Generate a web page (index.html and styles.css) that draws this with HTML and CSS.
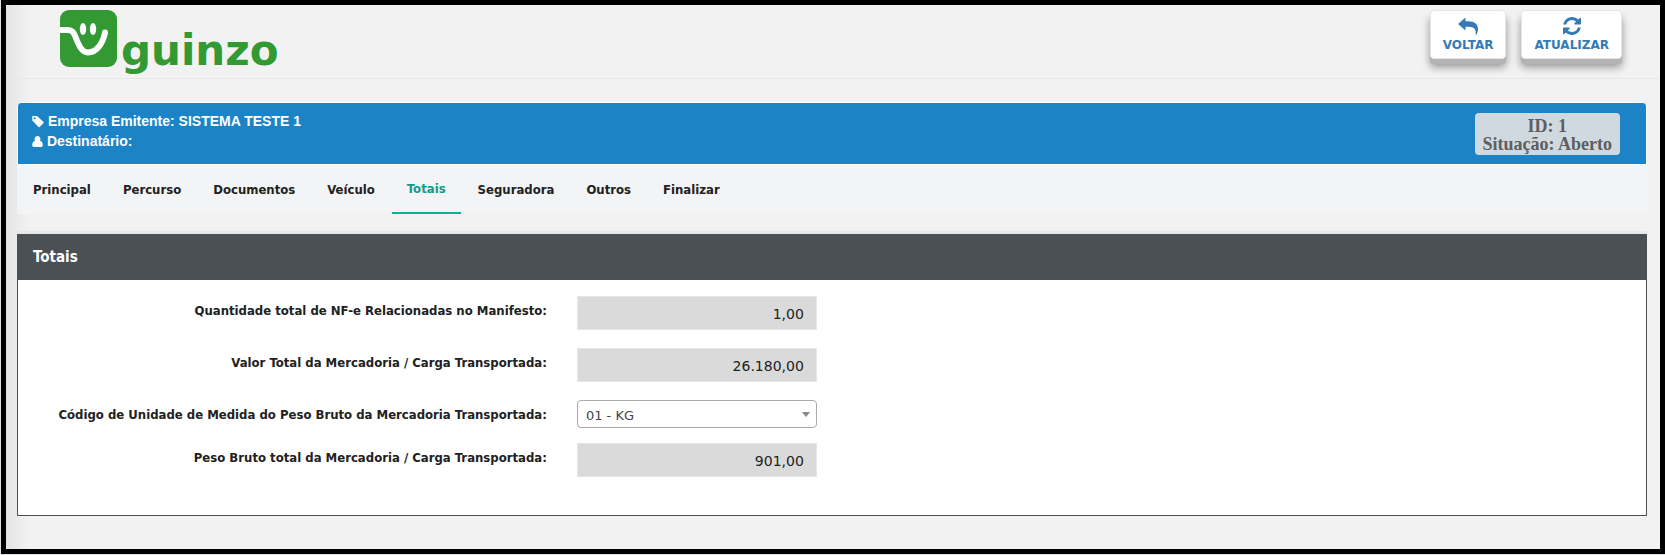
FILE: index.html
```html
<!DOCTYPE html>
<html lang="pt-br">
<head>
  <meta charset="UTF-8">
  <meta name="viewport" content="width=device-width, initial-scale=1.0">
  <title>Guinzo - Manifesto</title>
  <link rel="stylesheet" href="styles.css">
</head>
<body>
  <div class="page">

    <header class="header">
      <a class="logo" href="#">
        <svg class="logo-icon" viewBox="0 0 57 57" aria-hidden="true">
          <rect width="57" height="57" rx="9" fill="#339933"/>
          <path d="M0 20H8C12 20 13.500 22 15.500 27C19 36 22 42.500 28 42.500C37 42.500 43 33 45 22.500" fill="none" stroke="#fff" stroke-width="6"/>
          <circle cx="45" cy="22.500" r="3" fill="#fff"/>
          <ellipse cx="23" cy="19" rx="3.200" ry="6" fill="#fff"/>
          <ellipse cx="33" cy="19" rx="3.200" ry="6" fill="#fff"/>
        </svg>
        <span class="logo-text">guinzo</span>
      </a>
      <div class="header-buttons">
        <button type="button" class="btn-top">
          <svg width="20" height="18" viewBox="0 0 20 18" aria-hidden="true"><path fill="currentColor" d="M7.500 0.500V4.200H10C17 4.200 20 7.500 20 12C20 14.500 19 17 18.200 17.700C17.800 18 17.500 17.800 17.600 17.300C18.300 12.500 16.500 9.800 10 9.800H7.500V13.500L0 7Z"/></svg>
          <span>VOLTAR</span>
        </button>
        <button type="button" class="btn-top">
          <svg width="18" height="18" viewBox="0 0 1536 1536" aria-hidden="true"><path fill="currentColor" d="M1511 928q0 5-1 7-64 268-268 434.500T764 1536q-146 0-282.500-55T238 1324l-129 129q-19 19-45 19t-45-19-19-45V960q0-26 19-45t45-19h448q26 0 45 19t19 45-19 45l-137 137q71 66 161 102t187 36q134 0 250-65t186-179q11-17 53-117 8-23 30-23h192q13 0 22.500 9.500t9.500 22.500zm25-800v448q0 26-19 45t-45 19h-448q-26 0-45-19t-19-45 19-45l138-138Q969 256 768 256q-134 0-250 65T332 500q-11 17-53 117-8 23-30 23H50q-13 0-22.500-9.500T18 608v-7q65-268 270-434.500T768 0q146 0 284 55.500T1297 212l130-129q19-19 45-19t45 19 19 45z"/></svg>
          <span>ATUALIZAR</span>
        </button>
      </div>
    </header>

    <main class="content">
      <section class="banner">
        <div class="banner-info">
          <div>
            <svg width="12" height="13" viewBox="0 0 13 13" aria-hidden="true"><path fill="currentColor" fill-rule="evenodd" d="M1 0.500H5.500L12.500 7Q13 7.600 12.500 8.200L8.300 12.400Q7.700 12.900 7.100 12.400L0.300 5.500V1.200Q0.400 0.600 1 0.500ZM2.800 1.900A1.100 1.100 0 1 0 2.810 1.900Z"/></svg>
            Empresa Emitente: SISTEMA TESTE 1
          </div>
          <div>
            <svg width="11" height="13" viewBox="0 0 12 13" aria-hidden="true"><path fill="currentColor" d="M6 0.500A3.200 3.300 0 0 1 8.600 5.800Q11.700 6.200 11.700 10.500Q11.700 12.500 9.700 12.500H2.300Q0.300 12.500 0.300 10.500Q0.300 6.200 3.400 5.800A3.200 3.300 0 0 1 6 0.500Z"/></svg>
            Destinatário:
          </div>
        </div>
        <div class="banner-status">
          ID: 1<br>
          Situação: Aberto
        </div>
      </section>

      <nav class="tabs">
        <a href="#">Principal</a>
        <a href="#">Percurso</a>
        <a href="#">Documentos</a>
        <a href="#">Veículo</a>
        <a href="#" class="active">Totais</a>
        <a href="#">Seguradora</a>
        <a href="#">Outros</a>
        <a href="#">Finalizar</a>
      </nav>

      <section class="panel">
        <h2 class="panel-title">Totais</h2>
        <form class="panel-body">
          <div class="form-row">
            <label for="qtdNfe">Quantidade total de NF-e Relacionadas no Manifesto:</label>
            <div class="field"><input type="text" id="qtdNfe" value="1,00" readonly></div>
          </div>
          <div class="form-row">
            <label for="valorTotal">Valor Total da Mercadoria / Carga Transportada:</label>
            <div class="field"><input type="text" id="valorTotal" value="26.180,00" readonly></div>
          </div>
          <div class="form-row">
            <label for="unidade">Código de Unidade de Medida do Peso Bruto da Mercadoria Transportada:</label>
            <div class="field select-field">
              <select id="unidade">
                <option>01 - KG</option>
                <option>02 - TON</option>
              </select>
            </div>
          </div>
          <div class="form-row">
            <label for="pesoBruto">Peso Bruto total da Mercadoria / Carga Transportada:</label>
            <div class="field"><input type="text" id="pesoBruto" value="901,00" readonly></div>
          </div>
        </form>
      </section>
    </main>

  </div>
</body>
</html>
```

FILE: styles.css
```css
* {
  box-sizing: border-box;
}

body {
  margin: 0;
  padding: 0 0 1px 1px;
  min-height: 100vh;
  display: flex;
  background: #dfe2e5;
  font-family: "DejaVu Sans Condensed", "DejaVu Sans", sans-serif;
  font-size: 13px;
  color: #212121;
}

.page {
  flex: 1;
  border: 5px solid #000;
  background: linear-gradient(to right, #e4e4e4, #f2f2f2 24px);
}

/* topo */
.header {
  display: flex;
  justify-content: space-between;
  align-items: flex-start;
  height: 74px;
  padding: 5px 38px 0 54px;
  border-bottom: 1px solid #e7e7e7;
}

.logo {
  display: flex;
  gap: 4px;
  color: #339933;
  text-decoration: none;
}

.logo-icon {
  width: 57px;
  height: 57px;
}

.logo-text {
  padding-top: 15px;
  font-family: "DejaVu Sans", sans-serif;
  font-size: 42px;
  font-weight: bold;
  line-height: 52px;
}

.header-buttons {
  display: flex;
  gap: 15px;
}

.btn-top {
  display: flex;
  flex-direction: column;
  align-items: center;
  height: 49px;
  padding: 6px 12px 0;
  border: 1px solid #e7e7e7;
  border-radius: 4px;
  background: #fff;
  box-shadow: 0 5px 0 #b3b3b3, 0 8px 8px rgba(0, 0, 0, 0.4);
  color: #337ab7;
  font-family: "DejaVu Sans", sans-serif;
  font-size: 12px;
  font-weight: bold;
  line-height: 20px;
  cursor: pointer;
}

.content {
  padding: 23px 13px 0 11px;
}

/* faixa azul */
.banner {
  display: flex;
  justify-content: space-between;
  height: 63px;
  padding: 8px 26px 0 14px;
  border: 1px solid #fff;
  border-radius: 4px 4px 0 0;
  background: #1c84c6;
  color: #fff;
}

.banner-info {
  font-family: "Liberation Sans", Arial, sans-serif;
  font-size: 14px;
  font-weight: bold;
  line-height: 20px;
}

.banner-info svg {
  vertical-align: -2px;
}

.banner-status {
  height: 42px;
  margin-top: 2px;
  padding: 4px 8px;
  border-radius: 4px;
  background: #d0d9df;
  color: #5e5e5e;
  font-family: "Liberation Serif", "Times New Roman", serif;
  font-size: 18px;
  font-weight: bold;
  line-height: 18px;
  text-align: center;
}

/* abas */
.tabs {
  display: flex;
  gap: 2px;
  height: 49px;
  padding-left: 1px;
  background: #f3f4f6;
}

.tabs a {
  padding: 16px 15px 0;
  color: #212121;
  font-weight: bold;
  line-height: 18px;
  text-decoration: none;
}

.tabs .active {
  padding-top: 15px;
  border-bottom: 2px solid #00b393;
  color: #109c87;
}

/* painel */
.panel {
  margin-top: 20px;
  border: 1px solid #4b5054;
  background: #fff;
  box-shadow: 0 -3px 0 #e5e7e8;
}

.panel-title {
  margin: 0;
  padding: 0 15px;
  background: #4b5054;
  color: #fff;
  font-size: 15px;
  line-height: 45px;
}

.panel-body {
  padding: 16px 0 20px 2px;
}

.form-row {
  display: flex;
  margin-bottom: 15px;
}

.form-row label {
  width: 33.33%;
  padding: 6px 15px 0 0;
  font-weight: bold;
  line-height: 18px;
  text-align: right;
}

.field {
  position: relative;
  width: 16.6%;
  min-width: 180px;
  padding: 0 15px;
}

.field input {
  display: block;
  width: 100%;
  height: 34px;
  margin-bottom: 3px;
  padding: 2px 12px 0;
  border: 1px solid #e5e6e7;
  background: #dadada;
  color: #212121;
  font-family: "DejaVu Sans", sans-serif;
  font-size: 14px;
  text-align: right;
}

.field select {
  display: block;
  width: 100%;
  height: 28px;
  padding: 2px 8px 0;
  border: 1px solid #aaa;
  border-radius: 4px;
  background: #fff;
  color: #444;
  font-family: "DejaVu Sans", sans-serif;
  font-size: 13px;
  appearance: none;
}

/* seta do select */
.select-field::after {
  content: "";
  position: absolute;
  top: 12px;
  right: 22px;
  border: 4px solid transparent;
  border-top: 5px solid #888;
  border-bottom: 0;
  pointer-events: none;
}
```
